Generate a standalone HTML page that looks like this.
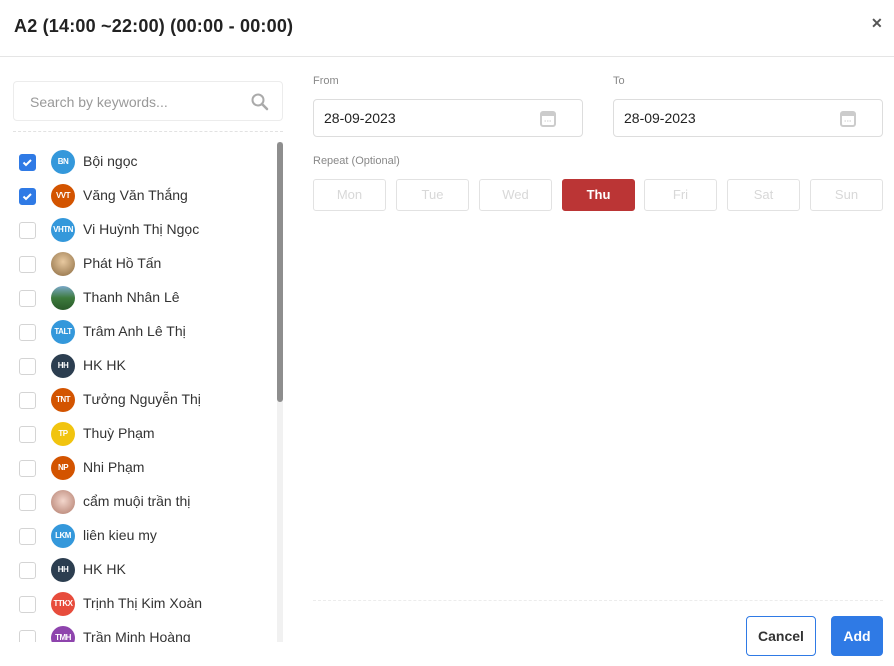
<!DOCTYPE html>
<html><head><meta charset="utf-8"><style>
*{box-sizing:border-box;margin:0;padding:0}
body{width:894px;height:666px;background:#fff;font-family:"Liberation Sans","Noto Sans CJK SC",sans-serif;position:relative;overflow:hidden;color:#333}
.title{position:absolute;left:14px;top:16px;font-size:18px;color:#222;font-weight:bold;letter-spacing:0.2px}
.x{position:absolute;left:871px;top:15px;font-size:14px;color:#555;font-weight:bold}
.hr{position:absolute;left:0;top:56px;width:894px;border-top:1px solid #e5e5e5}
.search{position:absolute;left:13px;top:81px;width:270px;height:40px;border:1px solid #ececec;border-radius:4px}
.search span{position:absolute;left:16px;top:12px;font-size:14px;color:#999}
.dash{position:absolute;border-top:1px dashed #e2e2e2}
.row{position:absolute;left:0;height:24px;width:270px}
.cb{position:absolute;left:19px;top:4px;width:17px;height:17px;border:1px solid #d4d4d4;border-radius:3px;background:#fff}
.cb.on{background:#2f7ae5;border-color:#2f7ae5}
.av{position:absolute;left:51px;top:0;width:24px;height:24px;border-radius:50%;color:#fff;font-size:8px;font-weight:bold;text-align:center;line-height:24px;letter-spacing:-0.5px;overflow:hidden}
.nm{position:absolute;left:83px;top:3px;font-size:14px;color:#333}
.sb{position:absolute;left:277px;top:142px;width:6px;height:500px;background:#f1f1f1}
.sb i{position:absolute;left:0;top:0;width:6px;height:260px;background:#8e8e8e;border-radius:3px}
.lbl{position:absolute;font-size:11px;color:#888}
.inp{position:absolute;top:99px;width:270px;height:38px;border:1px solid #ddd;border-radius:4px}
.inp span{position:absolute;left:10px;top:10px;font-size:14px;color:#222}
.day{position:absolute;top:179px;width:73px;height:32px;border:1px solid #e2e2e2;border-radius:3px;text-align:center;line-height:30px;font-size:13px;color:#d8d8d8}
.day.on{background:#bb3535;border-color:#bb3535;color:#fff;font-weight:bold}
.btn{position:absolute;top:616px;height:40px;border-radius:4px;font-size:14px;font-weight:bold;text-align:center;line-height:38px}
</style></head><body>
<div class="title">A2 (14:00 ~22:00) (00:00 - 00:00)</div>
<div class="x">✕</div>
<div class="hr"></div>
<div class="search"><span>Search by keywords...</span>
<svg style="position:absolute;left:236px;top:10px" width="20" height="20" viewBox="0 0 20 20"><circle cx="8" cy="8" r="5.5" fill="none" stroke="#aaa" stroke-width="2"/><path d="M12 12l5 5" stroke="#aaa" stroke-width="2.5" stroke-linecap="round"/></svg></div>
<div class="dash" style="left:13px;top:131px;width:270px"></div>

<div class="row" style="top:150px"><div class="cb on"><svg width="15" height="15" viewBox="0 0 15 15"><path d="M3.5 7.5l2.5 2.5 5-5" stroke="#fff" stroke-width="2" fill="none"/></svg></div><div class="av" style="background:#3498db">BN</div><div class="nm">Bội ngọc</div></div>
<div class="row" style="top:184px"><div class="cb on"><svg width="15" height="15" viewBox="0 0 15 15"><path d="M3.5 7.5l2.5 2.5 5-5" stroke="#fff" stroke-width="2" fill="none"/></svg></div><div class="av" style="background:#d35400">VVT</div><div class="nm">Văng Văn Thắng</div></div>
<div class="row" style="top:218px"><div class="cb"></div><div class="av" style="background:#3498db">VHTN</div><div class="nm">Vi Huỳnh Thị Ngọc</div></div>
<div class="row" style="top:252px"><div class="cb"></div><div class="av" style="background:radial-gradient(circle at 50% 40%,#e8c9a0,#8a6a40)"></div><div class="nm">Phát Hồ Tấn</div></div>
<div class="row" style="top:286px"><div class="cb"></div><div class="av" style="background:linear-gradient(#7aa8c8,#3d7a3d 50%,#2a5a2a)"></div><div class="nm">Thanh Nhân Lê</div></div>
<div class="row" style="top:320px"><div class="cb"></div><div class="av" style="background:#3498db">TALT</div><div class="nm">Trâm Anh Lê Thị</div></div>
<div class="row" style="top:354px"><div class="cb"></div><div class="av" style="background:#2c3e50">HH</div><div class="nm">HK HK</div></div>
<div class="row" style="top:388px"><div class="cb"></div><div class="av" style="background:#d35400">TNT</div><div class="nm">Tưởng Nguyễn Thị</div></div>
<div class="row" style="top:422px"><div class="cb"></div><div class="av" style="background:#f1c40f">TP</div><div class="nm">Thuỳ Phạm</div></div>
<div class="row" style="top:456px"><div class="cb"></div><div class="av" style="background:#d35400">NP</div><div class="nm">Nhi Phạm</div></div>
<div class="row" style="top:490px"><div class="cb"></div><div class="av" style="background:radial-gradient(circle at 50% 45%,#f3d6cc,#b07a6a)"></div><div class="nm">cẩm muội trần thị</div></div>
<div class="row" style="top:524px"><div class="cb"></div><div class="av" style="background:#3498db">LKM</div><div class="nm">liên kieu my</div></div>
<div class="row" style="top:558px"><div class="cb"></div><div class="av" style="background:#2c3e50">HH</div><div class="nm">HK HK</div></div>
<div class="row" style="top:592px"><div class="cb"></div><div class="av" style="background:#e74c3c">TTKX</div><div class="nm">Trịnh Thị Kim Xoàn</div></div>
<div style="position:absolute;left:0;top:626px;width:276px;height:16px;overflow:hidden"><div class="row" style="top:0"><div class="cb"></div><div class="av" style="background:#8e44ad">TMH</div><div class="nm">Trần Minh Hoàng</div></div></div>
<div class="sb"><i></i></div>

<div class="lbl" style="left:313px;top:75px">From</div>
<div class="lbl" style="left:613px;top:75px">To</div>
<div class="inp" style="left:313px"><span>28-09-2023</span><svg style="position:absolute;left:226px;top:10px" width="16" height="17" viewBox="0 0 16 17"><rect x="1" y="2" width="14" height="14" rx="2" fill="none" stroke="#ccc" stroke-width="2"/><rect x="1" y="2" width="14" height="4" fill="#ccc"/><path d="M4.5 11h7" stroke="#ccc" stroke-dasharray="1.5 1"/></svg></div>
<div class="inp" style="left:613px"><span>28-09-2023</span><svg style="position:absolute;left:226px;top:10px" width="16" height="17" viewBox="0 0 16 17"><rect x="1" y="2" width="14" height="14" rx="2" fill="none" stroke="#ccc" stroke-width="2"/><rect x="1" y="2" width="14" height="4" fill="#ccc"/><path d="M4.5 11h7" stroke="#ccc" stroke-dasharray="1.5 1"/></svg></div>
<div class="lbl" style="left:313px;top:155px">Repeat (Optional)</div>
<div class="day" style="left:313px">Mon</div>
<div class="day" style="left:396px">Tue</div>
<div class="day" style="left:479px">Wed</div>
<div class="day on" style="left:562px">Thu</div>
<div class="day" style="left:644px">Fri</div>
<div class="day" style="left:727px">Sat</div>
<div class="day" style="left:810px">Sun</div>

<div class="dash" style="left:313px;top:600px;width:570px;border-color:#ececec"></div>
<div class="btn" style="left:746px;width:70px;border:1px solid #2f7ae5;color:#333">Cancel</div>
<div class="btn" style="left:831px;width:52px;background:#2f7ae5;color:#fff;border:1px solid #2f7ae5">Add</div>
</body></html>
